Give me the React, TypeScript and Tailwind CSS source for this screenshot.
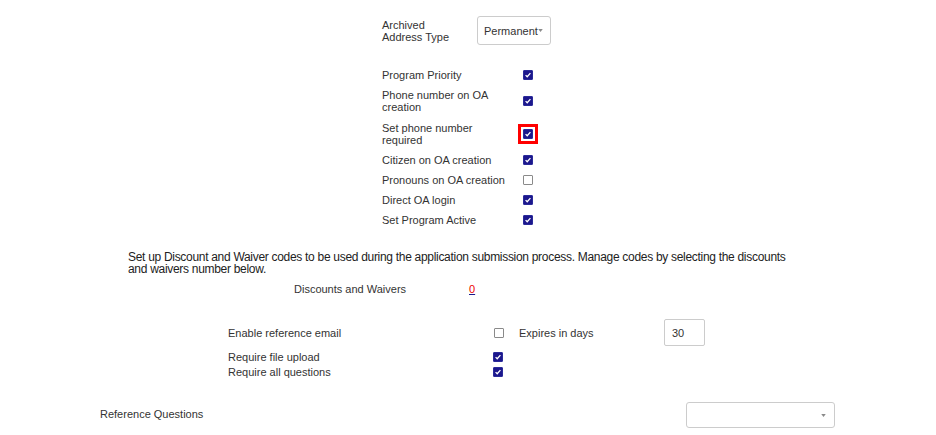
import React from "react";

function Check({ checked }: { checked: boolean }) {
  return (
    <span
      className={`inline-flex h-[10px] w-[10px] shrink-0 items-center justify-center rounded-[1px] ${
        checked ? "bg-[#1c178c] border border-[#2a2a9a]" : "bg-white border border-[#8a8a8a]"
      }`}
    >
      {checked && (
        <svg viewBox="0 0 10 10" className="h-[8px] w-[8px]">
          <path d="M2 5.2 L4 7.2 L8 2.6" fill="none" stroke="white" strokeWidth="1.6" />
        </svg>
      )}
    </span>
  );
}

function Caret() {
  return (
    <svg viewBox="0 0 6 4" className="h-[3px] w-[5px]">
      <path d="M0 0 L6 0 L3 4 Z" fill="#8a8a8a" />
    </svg>
  );
}

const options: { label: React.ReactNode; checked: boolean; highlight?: boolean }[] = [
  { label: "Program Priority", checked: true },
  { label: <>Phone number on OA<br />creation</>, checked: true },
  { label: <>Set phone number<br />required</>, checked: true, highlight: true },
  { label: "Citizen on OA creation", checked: true },
  { label: "Pronouns on OA creation", checked: false },
  { label: "Direct OA login", checked: true },
  { label: "Set Program Active", checked: true },
];

export default function App() {
  return (
    <div className="min-h-[435px] w-[936px] bg-white font-['Liberation_Sans',Arial,sans-serif] text-[11px] leading-[12px] text-[#333]">
      {/* archived address */}
      <div className="flex items-center pl-[382px] pt-[16px]">
        <div className="w-[95px]">
          Archived
          <br />
          Address Type
        </div>
        <div className="flex h-[29px] w-[74px] items-center justify-between rounded-[3px] border border-[#ccc] pl-[6px] pr-[7px]">
          <span>Permanent</span>
          <Caret />
        </div>
      </div>

      {/* program options */}
      <div className="mt-[20px] pl-[382px]">
        {options.map((o, i) => (
          <div key={i} className={`flex items-center py-[4px] ${o.highlight ? "mt-[1px]" : ""}`}>
            <div className="w-[141px]">{o.label}</div>
            {o.highlight ? (
              <span className="-m-[5px] inline-flex border-3 border-[#f00] p-[2px]">
                <Check checked={o.checked} />
              </span>
            ) : (
              <Check checked={o.checked} />
            )}
          </div>
        ))}
      </div>

      {/* discounts */}
      <p className="mt-[21px] ml-[128px] w-[665px] text-[12px] tracking-[-0.3px] text-[#222]">
        Set up Discount and Waiver codes to be used during the application submission process. Manage codes by selecting the discounts
        and waivers number below.
      </p>
      <div className="mt-[8px] flex pl-[294px]">
        <span className="w-[175px]">Discounts and Waivers</span>
        <a href="#" className="text-[#e00] underline decoration-[#1c178c]">
          0
        </a>
      </div>

      {/* references */}
      <div className="mt-[24px] pl-[228px]">
        <div className="flex items-center">
          <span className="w-[266px]">Enable reference email</span>
          <Check checked={false} />
          <span className="ml-[15px] w-[145px]">Expires in days</span>
          <div className="flex h-[27px] w-[41px] items-center rounded-[2px] border border-[#ccc] pl-[7px] pt-[1px]">30</div>
        </div>
        <div className="mt-[5px] flex items-center">
          <span className="w-[265px]">Require file upload</span>
          <Check checked />
        </div>
        <div className="mt-[3px] flex items-center">
          <span className="w-[265px]">Require all questions</span>
          <Check checked />
        </div>
      </div>

      <div className="mt-[24px] flex items-center pl-[100px]">
        <span className="w-[586px] pb-[2px]">Reference Questions</span>
        <div className="flex h-[26px] w-[149px] items-center justify-end rounded-[3px] border border-[#ccc] pr-[8px]">
          <Caret />
        </div>
      </div>
    </div>
  );
}
